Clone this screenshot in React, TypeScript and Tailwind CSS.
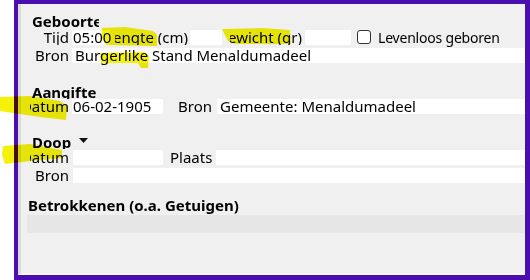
import React from 'react';

// clipped label: text right-aligned, overflow cut on the left like the original form
const Label: React.FC<{ text: string; className?: string }> = ({ text, className = '' }) => (
  <div className={`h-[15px] shrink-0 overflow-hidden flex justify-end leading-[15px] whitespace-nowrap ${className}`}>
    <span className="shrink-0">{text}</span>
  </div>
);

const Field: React.FC<{ value?: string; className?: string }> = ({ value = '', className = '' }) => (
  <div className={`h-[15px] shrink-0 bg-white leading-[15px] whitespace-nowrap ${className}`}>{value}</div>
);

const Highlights: React.FC = () => (
  <svg className="absolute inset-0 pointer-events-none mix-blend-multiply" width={530} height={280}>
    <g fill="#f4f20a">
      <polygon points="102,28 125,27 153,31 157,35 157,46 106,45 102,38" />
      <polygon points="222,29 262,28 290,30 291,44 236,44 228,41" />
      <polygon points="100,53 144,52 149,56 148,68 141,68 138,63 101,63" />
      <polygon points="0,97 30,96 60,101 67,106 66,120 40,117 0,111" />
      <polygon points="3,146 30,144 62,150 62,158 30,161 5,164 2,155" />
    </g>
  </svg>
);

export default function App() {
  return (
    <div className="relative w-[530px] h-[280px] bg-white pl-[14px] font-['Noto_Sans',sans-serif] text-[15px] text-black">
      <div className="h-full border-[#4a0eb0] border-l-4 border-t-4 border-r-[5px] border-b-[5px] flex">
        <div className="flex-1 flex flex-col bg-[#f0f0f0] border-l-[3px] border-l-[#d9d9d9] border-b-2 border-b-[#f8f8f8]">
          {/* Geboorte */}
          <div className="mt-[9px] ml-[11px] w-[67px] h-[16px] overflow-hidden font-bold leading-[16px] whitespace-nowrap">
            Geboorte
          </div>
          <div className="mt-[1px] flex items-start">
            <Label text="Tijd" className="ml-[9px] w-[39px]" />
            <Field value="05:00" className="ml-[3px] w-[38px] pl-[1px]" />
            <Label text="Lengte (cm)" className="ml-[5px] w-[73px]" />
            <Field className="ml-[2px] w-[32px]" />
            <Label text="Gewicht (gr)" className="ml-[8px] w-[72px]" />
            <Field className="ml-[3px] w-[46px]" />
            <div className="ml-[6px] w-[14px] h-[14px] border border-[#333] rounded-[3px] bg-white shrink-0" />
            <span className="ml-[7px] h-[15px] text-[14px] tracking-[-0.2px] leading-[15px] whitespace-nowrap">
              Levenloos geboren
            </span>
          </div>
          <div className="mt-[3px] flex items-start">
            <Label text="Bron" className="ml-[9px] w-[39px]" />
            <Field value="Burgerlike Stand Menaldumadeel" className="ml-[3px] flex-1 pl-[3px]" />
          </div>

          {/* Aangifte */}
          <div className="mt-[22px] ml-[11px] h-[14px] overflow-hidden font-bold leading-[14px]">Aangifte</div>
          <div className="flex items-start">
            <Label text="Datum" className="ml-[9px] w-[39px]" />
            <Field value="06-02-1905" className="ml-[3px] w-[91px] pl-[1px]" />
            <Label text="Bron" className="ml-[15px]" />
            <Field value="Gemeente: Menaldumadeel" className="ml-[5px] flex-1 pl-[3px]" />
          </div>

          {/* Doop */}
          <div className="mt-[21px] ml-[11px] h-[14px] flex items-center gap-[8px]">
            <span className="h-[14px] overflow-hidden font-bold leading-[14px]">Doop</span>
            <svg width="9" height="6" viewBox="0 0 9 6" className="mb-[3px]">
              <polygon points="0,0 9,0 4.5,5" fill="#111" />
            </svg>
          </div>
          <div className="mt-[1px] flex items-start">
            <Label text="Datum" className="ml-[9px] w-[39px]" />
            <Field className="ml-[4px] w-[90px]" />
            <Label text="Plaats" className="ml-[7px]" />
            <Field className="ml-[4px] flex-1" />
          </div>
          <div className="mt-[3px] flex items-start">
            <Label text="Bron" className="ml-[9px] w-[39px]" />
            <Field className="ml-[4px] flex-1" />
          </div>

          {/* Betrokkenen */}
          <div className="mt-[14px] ml-[7px] h-[16px] font-bold leading-[16px] whitespace-nowrap">
            Betrokkenen (o.a. Getuigen)
          </div>
          <div className="mt-[2px] ml-[6px] h-[18px] bg-[#e6e6e6]" />
          <div className="flex-1" />
        </div>
      </div>
      <Highlights />
    </div>
  );
}
